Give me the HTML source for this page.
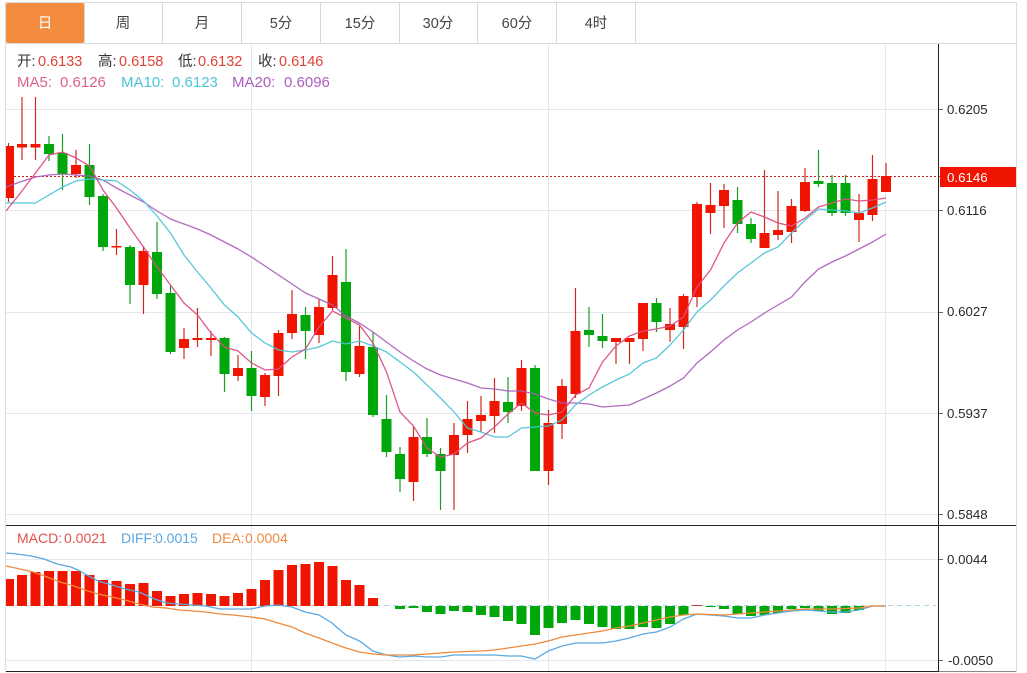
<!DOCTYPE html>
<html>
<head>
<meta charset="utf-8">
<title>K线图</title>
<style>
html,body{margin:0;padding:0;background:#fff;width:1027px;height:673px;overflow:hidden}
svg{display:block}
text{font-family:"Liberation Sans","Noto Sans CJK SC",sans-serif}
.tab{font-size:14.5px;fill:#444;text-anchor:middle}
.lg{font-size:14.5px}
.ma{font-size:15px}
.md{font-size:14px}
.tk{font-size:13.3px;fill:#2a2a2a}
</style>
</head>
<body>
<svg width="1027" height="673" viewBox="0 0 1027 673" xmlns="http://www.w3.org/2000/svg">
<defs><clipPath id="c"><rect x="6" y="44" width="932" height="628"/></clipPath></defs>

<!-- grid -->
<g stroke="#e3e9ef" stroke-width="1" fill="none" shape-rendering="crispEdges">
<path d="M6 109.5H938M6 210.5H938M6 312.5H938M6 413.5H938M6 514.5H938M6 559.5H938M6 660.5H938"/>
<path d="M251.5 44V671M548.5 44V671M885.5 44V671"/>
</g>

<!-- frame -->
<g fill="none" shape-rendering="crispEdges">
<path d="M5.5 2.5V672M1016.5 2.5V672M5.5 2.5H1016.5M5.5 43.5H1016.5" stroke="#d9dcdf"/>
<path d="M84.5 3V43M162.5 3V43M241.5 3V43M320.5 3V43M399.5 3V43M477.5 3V43M556.5 3V43M635.5 3V43" stroke="#d4d6d8"/>
<path d="M938.5 44V672M6 525.5H1016M6 671.5H938" stroke="#222"/>
<path d="M939 671.5H1016" stroke="#888"/>
<path d="M939 109.5h4M939 210.5h4M939 312.5h4M939 413.5h4M939 514.5h4M939 559.5h4M939 660.5h4M939 176.5h4" stroke="#666"/>
</g>

<!-- tabs -->
<rect x="6" y="3" width="78" height="40" rx="2" fill="#f38c3f"/>
<text class="tab" x="45" y="28" style="fill:#fff">日</text>
<text class="tab" x="123" y="28">周</text>
<text class="tab" x="202" y="28">月</text>
<text class="tab" x="281" y="28">5分</text>
<text class="tab" x="360" y="28">15分</text>
<text class="tab" x="438" y="28">30分</text>
<text class="tab" x="517" y="28">60分</text>
<text class="tab" x="596" y="28">4时</text>

<g clip-path="url(#c)" fill="none">
<!-- last price line -->
<path d="M6 176.5H938" stroke="#c8221a" stroke-width="1" stroke-dasharray="2 2" shape-rendering="crispEdges"/>

<!-- red wicks -->
<path stroke="#d2281c" stroke-width="1.2" d="M8.5 143V202M22 97V160M35.5 97V160M76 150V178M116.5 229V255M143.5 246V314M184 328V359M197.5 308V347M211 331V356M238 355V381M265 373V406M278.5 330V396M292 290V339M319 299V343M332.5 256V310M359.5 326V377M413.5 427V501M454 423V510M467.5 401V453M481 396V432M494.5 378V433M521.5 360V411M548.5 410V485M562 379V439M575.5 288V398M616 338V364M629.5 338V364M643 303V351M670 308V342M683.5 294V349M697 202V307M710.5 183V234M724 184V228M764.5 170V248M778 191V240M791.5 199V243M805 168V212M859 194V242M872.5 155V221M886 163V192"/>
<!-- red bodies -->
<path stroke="#f01500" stroke-width="10" d="M9 146V198M22 144V147.5M35.5 144V147.5M76 165V174M116.5 246V247.5M143.5 251V285M184 339V348M197.5 338V340M211 338V340M238 368V376M265 375V397M278.5 333V376M292 314V333M319 307V335M332.5 275V308M359.5 346V374M413.5 437V482M454 435V455M467.5 419V435M481 415V421M494.5 401V416M521.5 368V406M548.5 423V471M562 386V424M575.5 331V394M616 338V342M629.5 338V342M643 303V339M670 324V330M683.5 296V327M697 204V297M710.5 205V213M724 190V206M764.5 233V248M778 230V235M791.5 206V232M805 182V211M859 213V220M872.5 179V215M886 176V192"/>
<!-- green wicks -->
<path stroke="#1c9c22" stroke-width="1.2" d="M49 136V161M62.5 134V190M89.5 144V205M103 194V251M130 245V304M157 222V299M170.5 285V354M224.5 337V392M251.5 351V411M305.5 307V359M346 249V381M373 332V417M386.5 395V457M400 447V492M427 418V457M440.5 448V510M508 377V423M535 365V471M589 307V347M602.5 314V348M656.5 298V332M737.5 187V233M751 218V243M818.5 150V187M832 175V216M845.5 175V216"/>
<!-- green bodies -->
<path stroke="#00a70b" stroke-width="10" d="M49 144V154M62.5 153V174M89.5 165V197M103 196V247M130 247V285M157 252V294M170.5 293V352M224.5 338V374M251.5 368V396M305.5 315V331M346 282V372M373 347V415M386.5 419V452M400 454V479M427 437V454M440.5 454V471M508 402V412M535 368V471M589 330V335M602.5 336V341M656.5 303V322M737.5 200V224M751 224V239M818.5 181V184M832 183V213M845.5 183V213"/>

<!-- MA20 -->
<path stroke="#a85abb" stroke-width="1.3" opacity=".9" d="M6 187L20 182 35.5 177 49 175 62.5 174 76 175 89.5 176 103 180 116.5 188 130 195 143.5 202 157 211 170.5 219 184 224 197.5 229 211 235 224.5 242 238 249 251.5 257 265 266 278.5 275 292 284 305.5 293 319 299 332.5 305 346 316 359.5 323 373 332 386.5 342 400 352 413.5 361 427 369 440.5 375 454 379 467.5 383 481 388 494.5 389 508 391 521.5 391 535 394 548.5 399 562 403 575.5 403 589 404 602.5 407 616 406 629.5 405 643 399 656.5 393 670 386 683.5 378 697 363 710.5 352 724 340 737.5 330 751 322 764.5 313 778 305 791.5 297 805 282 818.5 269 832 262 845.5 256 859 249 872.5 242 886 234"/>
<!-- MA10 -->
<path stroke="#4ec4d8" stroke-width="1.3" opacity=".95" d="M6 203H35.5L49 195 62.5 187 76 181 89.5 179 103 180 116.5 181 130 190 143.5 201 157 216 170.5 233 184 255 197.5 272 211 288 224.5 305 238 317 251.5 333 265 343 278.5 350 292 352 305.5 350 319 347 332.5 341 346 344 359.5 341 373 346 386.5 352 400 362 413.5 372 427 385 440.5 398 454 412 467.5 428 481 432 494.5 437 508 437 521.5 428 535 427 548.5 426 562 420 575.5 405 589 395 602.5 387 616 380 629.5 374 643 363 656.5 358 670 345 683.5 330 697 312 710.5 300 724 286 737.5 273 751 263 764.5 253 778 247 791.5 233 805 220 818.5 209 832 210 845.5 211 859 213 872.5 208 886 202"/>
<!-- MA5 -->
<path stroke="#dc4f86" stroke-width="1.3" opacity=".95" d="M6 211L22 191 35.5 173 49 155 62.5 152 76 158 89.5 166 103 190 116.5 208 130 228 143.5 247 157 267 170.5 285 184 303 197.5 315 211 333 224.5 347 238 351 251.5 363 265 370 278.5 369 292 357 305.5 349 319 327 332.5 311 346 318 359.5 325 373 343 386.5 372 400 412 413.5 426 427 448 440.5 457 454 454 467.5 443 481 438 494.5 427 508 414 521.5 403 535 413 548.5 415 562 412 575.5 395 589 388 602.5 362 616 346 629.5 336 643 331 656.5 329 670 326 683.5 317 697 287 710.5 270 724 243 737.5 223 751 212 764.5 217 778 223 791.5 226 805 218 818.5 207 832 203 845.5 199 859 201 872.5 200 886 198"/>

<!-- MACD zero -->
<path d="M6 605.5H936" stroke="#a9d7e6" stroke-width="1" stroke-dasharray="5 4" shape-rendering="crispEdges"/>
<!-- MACD red -->
<path stroke="#f01500" stroke-width="10" d="M9 579V606M22 575V606M35.5 572V606M49 571V606M62.5 571V606M76 571V606M89.5 575V606M103 580V606M116.5 581V606M130 584V606M143.5 583V606M157 591V606M170.5 596V606M184 594V606M197.5 593V606M211 594V606M224.5 596V606M238 593V606M251.5 589V606M265 580V606M278.5 570V606M292 565V606M305.5 564V606M319 562V606M332.5 566V606M346 580V606M359.5 585V606M373 598V606"/>
<path stroke="#c0392b" stroke-width="10" d="M697 605V606"/>
<!-- MACD green -->
<path stroke="#00a70b" stroke-width="10" d="M400 606V609M413.5 606V608M427 606V612M440.5 606V614M454 606V611M467.5 606V612M481 606V615M494.5 606V617M508 606V621M521.5 606V624M535 606V635M548.5 606V628M562 606V623M575.5 606V620M589 606V624M602.5 606V627M616 606V629M629.5 606V629M643 606V627M656.5 606V628M670 606V624M683.5 606V615M710.5 606V607M724 606V609M737.5 606V614M751 606V616M764.5 606V615M778 606V613M791.5 606V609M805 606V608M818.5 606V611M832 606V614M845.5 606V613M859 606V610"/>
<!-- DIFF -->
<path stroke="#5ca8e2" stroke-width="1.3" d="M6 553L17 554 31 556 44 559 57 564 71 567 80 571 85 574 98 581 112 585 125 589 139 592 152 598 166 603 179 604 193 605 206 606 220 609 233 609 251 609 265 606 278 605 292 607 305 612 319 615 332 623 340 630 346 635 359.5 641 373 651 386.5 655 400 657 413.5 656 427 657 440.5 657 454 655 467.5 655 494.5 655 508 656 521.5 656 535 659 548.5 651 562 646 575.5 643 589 643 602.5 643 616 641 629.5 638 643 634 656.5 632 670 627 683.5 619 697 614 724 616 737.5 618 751 618 764.5 615 778 613 791.5 611 805 610 818.5 611 832 612 845.5 612 859 610 872.5 606 886 606"/>
<!-- DEA -->
<path stroke="#ef8a3c" stroke-width="1.3" d="M6 566L20 569 33 572 47 577 60 582 71 585 85 590 98 594 112 597 125 600 139 604 152 607 166 608 179 610 193 611 206 612 220 614 233 615 251 617 265 619 278 623 292 627 305 633 319 638 332 643 346 648 359.5 652 373 654 386.5 655 400 655 413.5 655 427 654 440.5 653 454 652 481 651 494.5 650 508 648 521.5 646 535 644 548.5 641 562 637 575.5 635 589 633 602.5 631 616 628 629.5 626 643 623 656.5 620 670 617 683.5 615 697 614 724 615 751 613 778 611 805 609 832 609 859 608 872 606 886 606"/>
</g>

<!-- price tag -->
<rect x="940" y="167" width="76" height="20" fill="#f01500"/>
<text class="tk" x="947" y="182" style="fill:#fff">0.6146</text>
<text class="tk" x="947" y="114">0.6205</text>
<text class="tk" x="947" y="215">0.6116</text>
<text class="tk" x="947" y="316">0.6027</text>
<text class="tk" x="947" y="418">0.5937</text>
<text class="tk" x="947" y="519">0.5848</text>
<text class="tk" x="947" y="564">0.0044</text>
<text class="tk" x="948" y="665">-0.0050</text>

<!-- legends -->
<text class="lg" x="17" y="66" fill="#333">开:</text><text class="lg" x="38" y="66" fill="#dc4336">0.6133</text>
<text class="lg" x="98" y="66" fill="#333">高:</text><text class="lg" x="119" y="66" fill="#dc4336">0.6158</text>
<text class="lg" x="178" y="66" fill="#333">低:</text><text class="lg" x="198" y="66" fill="#dc4336">0.6132</text>
<text class="lg" x="258" y="66" fill="#333">收:</text><text class="lg" x="279" y="66" fill="#dc4336">0.6146</text>
<text class="ma" x="17" y="87" fill="#df5f90">MA5:</text><text class="ma" x="60" y="87" fill="#df5f90">0.6126</text>
<text class="ma" x="121" y="87" fill="#4cc3d9">MA10:</text><text class="ma" x="172" y="87" fill="#4cc3d9">0.6123</text>
<text class="ma" x="232" y="87" fill="#ab5fc0">MA20:</text><text class="ma" x="284" y="87" fill="#ab5fc0">0.6096</text>
<text class="md" x="17" y="543" fill="#e0524f">MACD:</text><text class="md" x="64" y="543" fill="#e0524f">0.0021</text>
<text class="md" x="121" y="543" fill="#5aa7e3">DIFF:</text><text class="md" x="155" y="543" fill="#5aa7e3">0.0015</text>
<text class="md" x="212" y="543" fill="#ef8a45">DEA:</text><text class="md" x="245" y="543" fill="#ef8a45">0.0004</text>
</svg>
</body>
</html>
